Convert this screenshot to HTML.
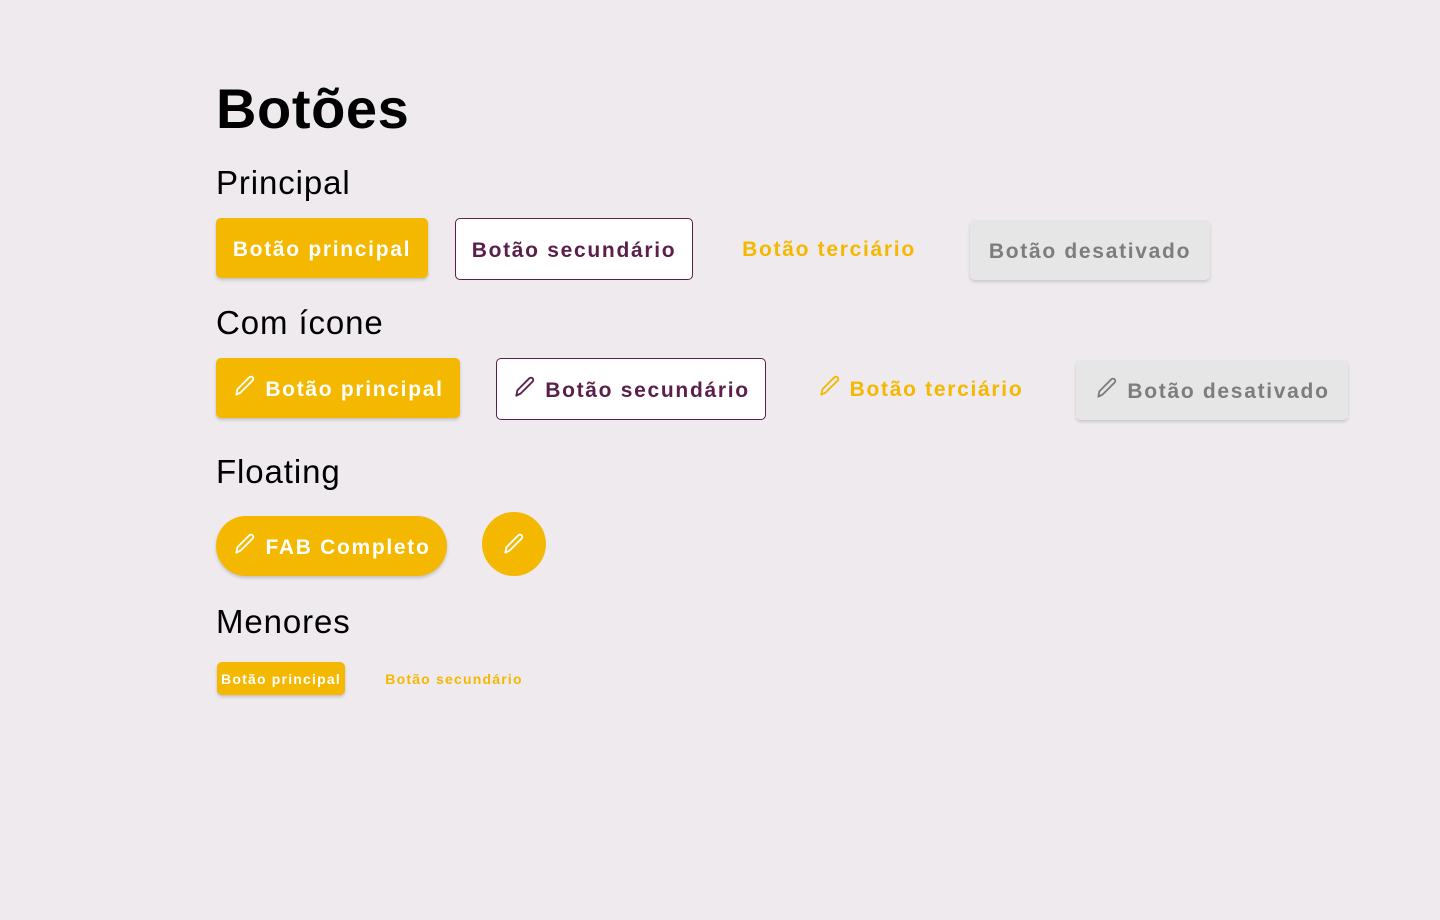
<!DOCTYPE html>
<html><head><meta charset="utf-8"><style>
body{margin:0;width:1440px;height:920px;background:#eeeaee;font-family:"Liberation Sans",sans-serif;position:relative;overflow:hidden}
h1{position:absolute;left:216px;top:76px;margin:0;font-size:56px;font-weight:bold;color:#000;letter-spacing:0.6px}
.h{position:absolute;left:216px;font-size:33px;color:#000;font-weight:normal;letter-spacing:0.9px}
.b{position:absolute;display:flex;align-items:center;justify-content:center;box-sizing:border-box;font-size:21px;font-weight:bold;letter-spacing:1.7px;border-radius:5px;white-space:nowrap;padding-top:4px}
.p{background:#f5b800;color:#fff;box-shadow:0 2px 3px rgba(0,0,0,.18)}
.s{background:#fff;color:#5a1f4a;border:1px solid #5a1f4a}
.t{color:#f5b800}
.d{background:#e6e6e6;color:#7d7d7d;box-shadow:0 2px 3px rgba(0,0,0,.15)}
svg{width:26px;height:26px;margin-right:7px;margin-top:-8px;fill:none;stroke:currentColor;stroke-width:1.7;stroke-linejoin:round;stroke-linecap:round}
</style></head><body>
<h1>Botões</h1>
<div class="h" style="top:164px">Principal</div>
<div class="b p" style="left:216px;top:218px;width:212px;height:60px">Botão principal</div>
<div class="b s" style="left:455px;top:218px;width:238px;height:62px">Botão secundário</div>
<div class="b t" style="left:720px;top:218px;width:218px;height:60px">Botão terciário</div>
<div class="b d" style="left:970px;top:220px;width:240px;height:60px">Botão desativado</div>

<div class="h" style="top:304px">Com ícone</div>
<div class="b p" style="left:216px;top:358px;width:244px;height:60px"><svg viewBox="0 0 24 24"><path d="M4 20l1-5L16 4a2.1 2.1 0 0 1 3 3L8 18z"/></svg>Botão principal</div>
<div class="b s" style="left:496px;top:358px;width:270px;height:62px"><svg viewBox="0 0 24 24"><path d="M4 20l1-5L16 4a2.1 2.1 0 0 1 3 3L8 18z"/></svg>Botão secundário</div>
<div class="b t" style="left:800px;top:358px;width:240px;height:60px"><svg viewBox="0 0 24 24"><path d="M4 20l1-5L16 4a2.1 2.1 0 0 1 3 3L8 18z"/></svg>Botão terciário</div>
<div class="b d" style="left:1076px;top:360px;width:272px;height:60px"><svg viewBox="0 0 24 24"><path d="M4 20l1-5L16 4a2.1 2.1 0 0 1 3 3L8 18z"/></svg>Botão desativado</div>

<div class="h" style="top:453px">Floating</div>
<div class="b p" style="left:216px;top:516px;width:231px;height:60px;border-radius:30px"><svg viewBox="0 0 24 24"><path d="M4 20l1-5L16 4a2.1 2.1 0 0 1 3 3L8 18z"/></svg>FAB Completo</div>
<div class="b p" style="left:482px;top:512px;width:64px;height:64px;border-radius:50%;box-shadow:none;padding:0"><svg viewBox="0 0 24 24" style="margin:0"><path d="M4 20l1-5L16 4a2.1 2.1 0 0 1 3 3L8 18z"/></svg></div>

<div class="h" style="top:603px">Menores</div>
<div class="b p" style="left:217px;top:662px;width:128px;height:33px;font-size:14px;letter-spacing:1.2px;padding-top:1px">Botão principal</div>
<div class="b t" style="left:376px;top:662px;width:156px;height:33px;font-size:14px;letter-spacing:1.2px;padding-top:1px">Botão secundário</div>
</body></html>
